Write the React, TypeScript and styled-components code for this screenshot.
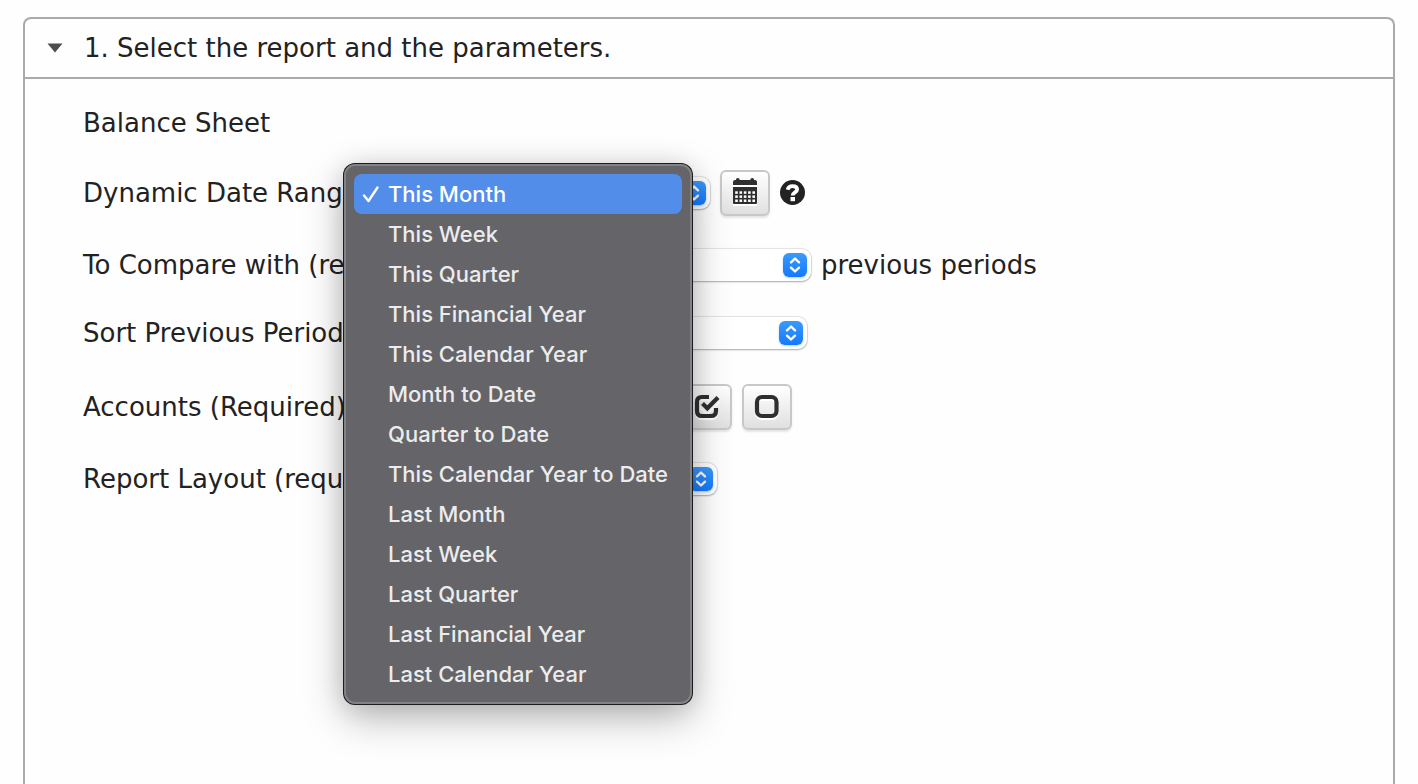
import React from "react";
import styled, { createGlobalStyle, css } from "styled-components";

const GlobalStyle = createGlobalStyle`
  *, *::before, *::after { box-sizing: border-box; }
  body {
    margin: 0;
    background: #fefefe;
    color: #222;
    font: 26px/34px Verdana, "DejaVu Sans", sans-serif;
  }
`;

const Page = styled.main`
  padding: 17px 23px 0;
`;

const Panel = styled.section`
  min-height: calc(100vh - 17px);
  border: 2px solid #aaa;
  border-bottom: 0;
  border-radius: 8px 8px 0 0;
`;

const PanelTitle = styled.h1`
  margin: 0;
  border-bottom: 2px solid #aaa;
  font-size: inherit;
  font-weight: normal;
`;

const PanelToggle = styled.button`
  display: flex;
  align-items: center;
  width: 100%;
  height: 58px;
  padding: 0 22px;
  gap: 21px;
  border: 0;
  background: none;
  color: inherit;
  font: inherit;
  text-align: left;
  white-space: nowrap;
`;

const PanelBody = styled.div`
  padding: 27px 58px 32px;
`;

const ReportName = styled.h2`
  margin: 0 0 30px;
  font-size: inherit;
  font-weight: normal;
`;

const Fields = styled.form`
  display: flex;
  flex-direction: column;
  gap: 32px;
`;

const Row = styled.div<{ $tall?: boolean }>`
  display: flex;
  align-items: center;
  gap: 10px;
  height: ${(p) => (p.$tall ? 46 : 36)}px;
  padding-bottom: ${(p) => (p.$tall ? 0 : 2)}px;
  white-space: nowrap;
`;

const Label = styled.label`
  flex: none;
  width: 380px;
`;

const SelectBox = styled.span<{ $width: number }>`
  position: relative;
  flex: none;
  width: ${(p) => p.$width}px;
  height: 32px;
`;

const NativeSelect = styled.select`
  appearance: none;
  display: block;
  width: 100%;
  height: 100%;
  padding: 0 36px 0 12px;
  border: 0;
  border-radius: 9px;
  background: #fff;
  box-shadow: 0 0 1px 1px rgba(0, 0, 0, 0.1), 0 1px 2px rgba(0, 0, 0, 0.26);
  color: #222;
  font: 22px Inter, sans-serif;
`;

const Stepper = styled.svg`
  position: absolute;
  top: 4px;
  right: 4px;
  width: 24px;
  height: 24px;
  border-radius: 6px;
  background: linear-gradient(#3b99fc, #147aff);
  box-shadow: 0 1px 2px rgba(20, 100, 220, 0.3);
  pointer-events: none;
`;

const IconButton = styled.button`
  display: flex;
  flex: none;
  align-items: center;
  justify-content: center;
  width: 50px;
  height: 46px;
  padding: 0;
  border: 2px solid #c8c8c8;
  border-radius: 6px;
  background: linear-gradient(#fff, #e0e0e0);
  box-shadow: 0 2px 2px rgba(0, 0, 0, 0.1);
  color: #2f2f2f;

  svg {
    filter: drop-shadow(0 2px 0 #fff);
  }
`;

const HelpLink = styled.a`
  display: flex;
  flex: none;
  color: #222;
`;

const Menu = styled.div`
  position: absolute;
  z-index: 2;
  top: -13px;
  left: -129px;
  width: 348px;
  padding: 8px;
  border: 2px solid #838386;
  border-radius: 11px;
  background: #656468;
  box-shadow: 0 0 0 1px #1c1c1e, 0 14px 40px rgba(0, 0, 0, 0.28), 0 2px 24px rgba(0, 0, 0, 0.12);
`;

const MenuItem = styled.button<{ $selected?: boolean }>`
  display: flex;
  align-items: center;
  width: 100%;
  height: 40px;
  padding: 0 8px;
  gap: 8px;
  border: 0;
  border-radius: 8px;
  background: none;
  color: #ececec;
  font: 500 22px/40px Inter, sans-serif;
  text-align: left;
  white-space: nowrap;
  ${(p) =>
    p.$selected &&
    css`
      background: #528de9;
      color: #fff;
    `}
`;

const CheckSlot = styled.span`
  display: flex;
  flex: none;
  width: 18px;
`;

const PERIODS = [
  "This Month",
  "This Week",
  "This Quarter",
  "This Financial Year",
  "This Calendar Year",
  "Month to Date",
  "Quarter to Date",
  "This Calendar Year to Date",
  "Last Month",
  "Last Week",
  "Last Quarter",
  "Last Financial Year",
  "Last Calendar Year",
];

function Select({ id, width, options, children }: {
  id: string;
  width: number;
  options: string[];
  children?: React.ReactNode;
}) {
  return (
    <SelectBox $width={width}>
      <NativeSelect id={id}>
        {options.map((o) => (
          <option key={o}>{o}</option>
        ))}
      </NativeSelect>
      <Stepper viewBox="0 0 24 24" fill="none" stroke="#fff" strokeWidth="2.4" strokeLinecap="round" strokeLinejoin="round" aria-hidden="true">
        <path d="M8 9.3 12 5.5 16 9.3M8 14.7 12 18.5 16 14.7" />
      </Stepper>
      {children}
    </SelectBox>
  );
}

function CalendarIcon() {
  const rows = [13.3, 17.4, 21.5];
  const columns = [2.2, 6.5, 10.8, 15.1, 19.4];
  return (
    <svg width="24" height="30" viewBox="0 0 24 30" aria-hidden="true">
      <path fill="currentColor" d="M0 7V4Q0 2 2 2H3V1.500Q3 0 4.800 0T6.600 1.500V2H17.400V1.500Q17.400 0 19.200 0T21 1.500V2H22Q24 2 24 4V7ZM0 9H24V25Q24 26 23 26H1Q0 26 0 25Z" />
      {rows.map((y) =>
        columns.map((x) => <rect key={`${x}-${y}`} x={x} y={y} width="2.600" height="2.500" fill="#fff" />)
      )}
    </svg>
  );
}

export default function App() {
  return (
    <>
      <GlobalStyle />
      <Page>
        <Panel>
          <PanelTitle>
            <PanelToggle type="button" aria-expanded="true">
              <svg width="16" height="10" viewBox="0 0 16 10" aria-hidden="true">
                <path d="M.5 .5H15.500L8 9.500Z" fill="#4c4c4c" />
              </svg>
              1. Select the report and the parameters.
            </PanelToggle>
          </PanelTitle>
          <PanelBody>
            <ReportName>Balance Sheet</ReportName>
            <Fields>
              <Row $tall>
                <Label htmlFor="range">Dynamic Date Range</Label>
                <Select id="range" width={237} options={PERIODS}>
                  <Menu role="listbox" aria-label="Dynamic Date Range">
                    {PERIODS.map((p, i) => (
                      <MenuItem key={p} type="button" role="option" aria-selected={i === 0} $selected={i === 0}>
                        <CheckSlot>
                          {i === 0 && (
                            <svg width="18" height="18" viewBox="0 0 18 18" fill="none" stroke="#fff" strokeWidth="2.400" strokeLinecap="round" strokeLinejoin="round" aria-hidden="true">
                              <path d="M2 10.500 6.500 16 15.500 2.500" />
                            </svg>
                          )}
                        </CheckSlot>
                        {p}
                      </MenuItem>
                    ))}
                  </Menu>
                </Select>
                <IconButton type="button" aria-label="Choose dates">
                  <CalendarIcon />
                </IconButton>
                <HelpLink href="#help" aria-label="Help">
                  <svg width="25" height="27" viewBox="0 0 25 27" aria-hidden="true">
                    <circle cx="12.500" cy="12.500" r="12.500" fill="currentColor" />
                    <path d="M7.600 9.800Q8.600 6.100 12.500 6.100C15.500 6.100 17.100 7.600 17.100 9.600C17.100 12.600 12.700 12.200 12.700 15.600" fill="none" stroke="#fff" strokeWidth="3.800" />
                    <rect x="10.500" y="17" width="4.500" height="4.200" fill="#fff" />
                  </svg>
                </HelpLink>
              </Row>
              <Row>
                <Label htmlFor="compare">To Compare with (required)</Label>
                <Select id="compare" width={338} options={["1", "2", "3"]} />
                <span>previous periods</span>
              </Row>
              <Row>
                <Label htmlFor="sort">Sort Previous Periods</Label>
                <Select id="sort" width={334} options={["Ascending", "Descending"]} />
              </Row>
              <Row $tall>
                <Label htmlFor="accounts">Accounts (Required)</Label>
                <Select id="accounts" width={199} options={["All"]} />
                <IconButton type="button" aria-label="Select all accounts">
                  <svg width="28" height="28" viewBox="0 0 28 28" fill="none" stroke="currentColor" aria-hidden="true">
                    <path d="M16 4H9Q4 4 4 9V18Q4 23 9 23H18Q23 23 23 18V15" strokeWidth="4.200" />
                    <path d="M9 10.500 14 15.500 24.500 5" stroke="#f4f4f4" strokeWidth="7.500" />
                    <path d="M9.500 10.500 14.300 15.200 25 4.500" strokeWidth="4.200" />
                  </svg>
                </IconButton>
                <IconButton type="button" aria-label="Clear all accounts">
                  <svg width="28" height="28" viewBox="0 0 28 28" fill="none" stroke="currentColor" aria-hidden="true">
                    <rect x="4" y="4" width="19.500" height="19" rx="5" strokeWidth="4.200" />
                  </svg>
                </IconButton>
              </Row>
              <Row>
                <Label htmlFor="layout">Report Layout (required)</Label>
                <Select id="layout" width={244} options={["Standard"]} />
              </Row>
            </Fields>
          </PanelBody>
        </Panel>
      </Page>
    </>
  );
}
